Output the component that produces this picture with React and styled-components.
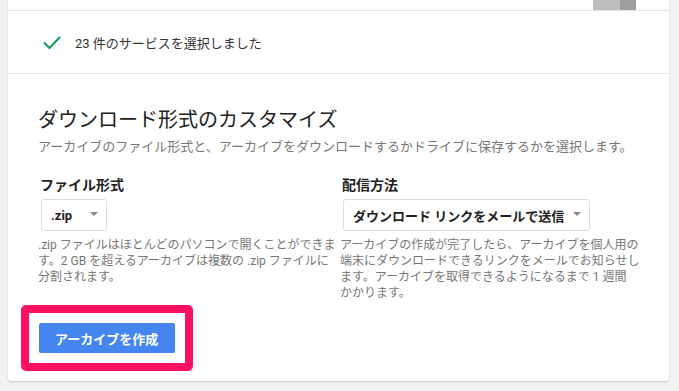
import React from "react";
import styled, { createGlobalStyle } from "styled-components";

const GlobalStyle = createGlobalStyle`
  html, body {
    margin: 0;
    padding: 0;
    background: #f2f2f2;
    font-family: Roboto, "Noto Sans CJK JP", sans-serif;
    color: #212121;
  }
`;

const Page = styled.div`
  padding: 0 10px 8px 8px;
`;

const Card = styled.div`
  background: #fff;
  border-radius: 0 0 3px 3px;
  box-shadow: 0 1px 2px rgba(0, 0, 0, 0.18);
`;

const Section = styled.div`
  border-bottom: ${props => (props.last ? "none" : "1px solid #e3e3e3")};
  padding: ${props => props.pad || "0 30px"};
`;

const TopStrip = styled.div`
  height: 10px;
  display: flex;
  justify-content: flex-end;
  padding-right: 33px;
`;

const Thumb = styled.div`
  width: 27px;
  height: 10px;
  background: #bdbdbd;
  border-right: 16px solid #9e9e9e;
`;

const CheckRow = styled.div`
  height: 62px;
  display: flex;
  align-items: center;
  gap: 13px;
  font-size: 13px;
  color: #333;
  padding-left: 4px;
`;

const Title = styled.h2`
  margin: 0;
  font-size: 20px;
  font-weight: 400;
  line-height: 28px;
  color: #222;
`;

const Subtitle = styled.p`
  margin: 3px 0 0;
  font-size: 13px;
  line-height: 20px;
  color: #777;
`;

const Columns = styled.div`
  display: grid;
  grid-template-columns: 300px 300px;
  column-gap: 2px;
  margin-top: 18px;
`;

const Column = styled.div`
  display: flex;
  flex-direction: column;
  align-items: flex-start;
`;

const Label = styled.div`
  font-size: 14px;
  font-weight: 700;
  line-height: 20px;
  padding-left: 2px;
  color: #222;
`;

const Select = styled.div`
  margin: 4px 0 0 3px;
  width: ${props => props.width}px;
  height: 32px;
  box-sizing: border-box;
  border: 1px solid #dcdcdc;
  border-radius: 3px;
  display: flex;
  align-items: center;
  justify-content: space-between;
  padding: 0 8px 0 9px;
  font-size: 13px;
  font-weight: 700;
  color: #222;
`;

const Arrow = styled.span`
  width: 0;
  height: 0;
  border-left: 4px solid transparent;
  border-right: 4px solid transparent;
  border-top: 4px solid #888;
  margin-top: -2px;
`;

const Desc = styled.p`
  margin: 6px 0 0;
  font-size: 12px;
  line-height: 16px;
  color: #777;
  white-space: nowrap;
`;

const Highlight = styled.div`
  display: inline-block;
  margin: 4px 0 0 -17px;
  border: 8px solid #ff1060;
  border-radius: 5px;
  padding: 10px;
`;

const PrimaryButton = styled.button`
  display: block;
  height: 30px;
  padding: 0 17px 0 16px;
  border: none;
  border-radius: 2px;
  background: #4485ef;
  color: #fff;
  font-family: Roboto, "Noto Sans CJK JP", sans-serif;
  font-size: 13px;
  font-weight: 700;
  cursor: pointer;
`;

const CheckIcon = () => (
  <svg width="20" height="16" viewBox="0 0 20 16">
    <path d="M2 8.5 L7.5 14 L18 3" fill="none" stroke="#0f9d58" strokeWidth="2" />
  </svg>
);

export default function App() {
  return (
    <Page>
      <GlobalStyle />
      <Card>
        <Section pad="0">
          <TopStrip>
            <Thumb />
          </TopStrip>
        </Section>
        <Section>
          <CheckRow>
            <CheckIcon />
            <span>23 件のサービスを選択しました</span>
          </CheckRow>
        </Section>
        <Section last pad="32px 30px 10px">
          <Title>ダウンロード形式のカスタマイズ</Title>
          <Subtitle>
            アーカイブのファイル形式と、アーカイブをダウンロードするかドライブに保存するかを選択します。
          </Subtitle>
          <Columns>
            <Column>
              <Label>ファイル形式</Label>
              <Select width={66}>
                .zip
                <Arrow />
              </Select>
              <Desc>
                .zip ファイルはほとんどのパソコンで開くことができま
                <br />
                す。2 GB を超えるアーカイブは複数の .zip ファイルに
                <br />
                分割されます。
              </Desc>
            </Column>
            <Column>
              <Label>配信方法</Label>
              <Select width={247}>
                ダウンロード リンクをメールで送信
                <Arrow />
              </Select>
              <Desc>
                アーカイブの作成が完了したら、アーカイブを個人用の
                <br />
                端末にダウンロードできるリンクをメールでお知らせし
                <br />
                ます。アーカイブを取得できるようになるまで 1 週間
                <br />
                かかります。
              </Desc>
            </Column>
          </Columns>
          <Highlight>
            <PrimaryButton>アーカイブを作成</PrimaryButton>
          </Highlight>
        </Section>
      </Card>
    </Page>
  );
}
